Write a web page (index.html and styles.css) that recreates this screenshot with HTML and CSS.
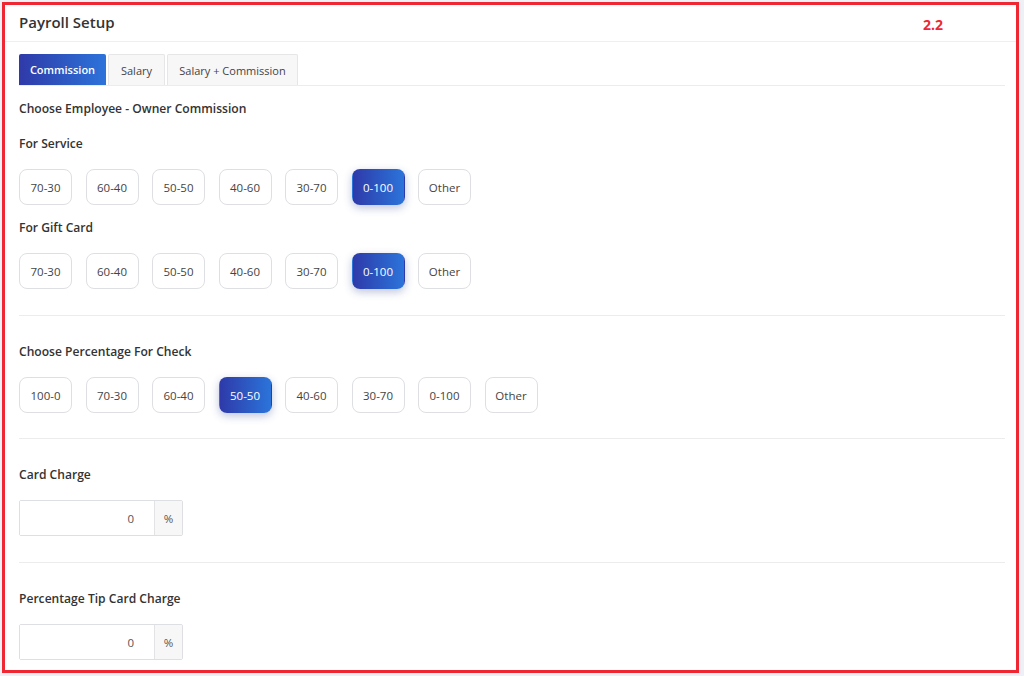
FILE: index.html
```html
<!DOCTYPE html>
<html>
<head>
<meta charset="utf-8">
<link rel="stylesheet" href="styles.css">
</head>
<body>
<div class="card">
  <div class="card-header">
    <h1 class="title">Payroll Setup</h1>
    <span class="tag">2.2</span>
  </div>
  <div class="card-body">
    <div class="tabs">
      <button class="tab active">Commission</button>
      <button class="tab">Salary</button>
      <button class="tab">Salary + Commission</button>
    </div>

    <div class="section first">
      <div class="heading">Choose Employee - Owner Commission</div>
      <div class="label label-service">For Service</div>
      <div class="options">
        <button class="opt">70-30</button>
        <button class="opt">60-40</button>
        <button class="opt">50-50</button>
        <button class="opt">40-60</button>
        <button class="opt">30-70</button>
        <button class="opt selected">0-100</button>
        <button class="opt">Other</button>
      </div>
      <div class="label label-gift">For Gift Card</div>
      <div class="options">
        <button class="opt">70-30</button>
        <button class="opt">60-40</button>
        <button class="opt">50-50</button>
        <button class="opt">40-60</button>
        <button class="opt">30-70</button>
        <button class="opt selected">0-100</button>
        <button class="opt">Other</button>
      </div>
    </div>

    <div class="section">
      <div class="label">Choose Percentage For Check</div>
      <div class="options">
        <button class="opt">100-0</button>
        <button class="opt">70-30</button>
        <button class="opt">60-40</button>
        <button class="opt selected">50-50</button>
        <button class="opt">40-60</button>
        <button class="opt">30-70</button>
        <button class="opt">0-100</button>
        <button class="opt">Other</button>
      </div>
    </div>

    <div class="section charge">
      <div class="label">Card Charge</div>
      <div class="input-group">
        <input class="input" type="text" value="0">
        <span class="addon">%</span>
      </div>
    </div>

    <div class="section last">
      <div class="label">Percentage Tip Card Charge</div>
      <div class="input-group">
        <input class="input" type="text" value="0">
        <span class="addon">%</span>
      </div>
    </div>
  </div>
</div>
</body>
</html>
```

FILE: styles.css
```css
* { box-sizing: border-box; }

html, body {
  margin: 0;
  padding: 0;
  background: #eef0f5;
  font-family: "Open Sans", "Noto Sans", sans-serif;
  color: #333;
}

.card {
  margin: 2px 0 0 2px;
  width: 1017px;
  height: 671px;
  background: #fff;
  border: 3px solid #ee2732;
  overflow: hidden;
}

.card-header {
  height: 37px;
  border-bottom: 1px solid #eeeff2;
  display: flex;
  align-items: center;
  justify-content: space-between;
  padding: 0 73px 2px 14px;
}

.title {
  margin: 0;
  font-size: 15px;
  font-weight: 600;
  color: #333;
}

.tag {
  color: #ee2732;
  font-weight: 700;
  font-size: 14px;
  margin-top: 5px;
}

.card-body {
  padding: 0 11px 0 14px;
}

.tabs {
  display: flex;
  gap: 2px;
  margin-top: 12px;
  border-bottom: 1px solid #ececef;
}

.tab {
  height: 31px;
  padding: 0;
  white-space: nowrap;
  font-family: inherit;
  font-size: 11px;
  color: #444;
  background: #f7f7f8;
  border: 1px solid #e6e6e9;
  border-bottom: none;
  border-radius: 2px 2px 0 0;
}

.tab:nth-child(2) { width: 57px; }
.tab:nth-child(3) { width: 131px; }

.tab.active {
  width: 87px;
  color: #fff;
  font-weight: 600;
  border: none;
  background: linear-gradient(90deg, #2f3aa8 0%, #2c73da 100%);
}

.section {
  border-bottom: 1px solid #ececef;
  padding: 27px 0 25px;
}

.section.first { padding-top: 14px; padding-bottom: 26px; }
.section.charge { padding-bottom: 26px; }
.section.last { border-bottom: none; }

.heading, .label {
  font-size: 12.1px;
  font-weight: 600;
  color: #333;
  line-height: 18px;
}

.label-service { margin-top: 17px; }
.label-gift { margin-top: 14px; }

.options {
  display: flex;
  gap: 13.5px;
  margin-top: 16px;
}

.opt {
  width: 53px;
  height: 36px;
  padding: 0;
  font-family: inherit;
  font-size: 11.5px;
  color: #444;
  background: #fff;
  border: 1px solid #dedfe3;
  border-radius: 8px;
}

.opt.selected {
  color: #fff;
  border-color: transparent;
  background: linear-gradient(90deg, #2e3aa9 0%, #2b74da 100%);
  box-shadow: 0 3px 8px rgba(40, 60, 140, 0.3);
}

.input-group {
  display: flex;
  width: 164px;
  height: 36px;
  margin-top: 16px;
  border: 1px solid #dedfe3;
  border-radius: 2px;
}

.input {
  width: 135px;
  height: 100%;
  border: none;
  border-right: 1px solid #e3e3e6;
  text-align: right;
  padding: 0 20px 0 0;
  font-family: inherit;
  font-size: 11.5px;
  color: #555;
  outline: none;
}

.addon {
  flex: 1;
  display: flex;
  align-items: center;
  justify-content: center;
  background: #f7f7f8;
  font-size: 11.5px;
  color: #555;
}
```
